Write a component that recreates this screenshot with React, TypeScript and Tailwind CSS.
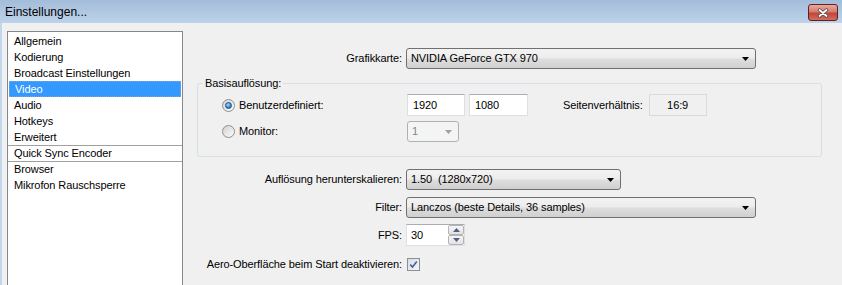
import React from "react";

const navItems = [
  "Allgemein",
  "Kodierung",
  "Broadcast Einstellungen",
  "Video",
  "Audio",
  "Hotkeys",
  "Erweitert",
];

const extraItems = ["Quick Sync Encoder", "Browser", "Mikrofon Rauschsperre"];

function Arrow({ color = "#000" }: { color?: string }) {
  return (
    <svg width="7" height="4" viewBox="0 0 7 4">
      <path d="M0 0H7L3.5 4Z" fill={color} />
    </svg>
  );
}

function Combo({ className, text }: { className: string; text: string }) {
  return (
    <div
      className={`${className} flex h-[21px] items-center justify-between rounded-[3px] border border-[#707070] bg-[linear-gradient(to_bottom,#f3f3f3_0%,#ececec_48%,#dedede_52%,#d0d0d0_100%)] pl-[4px] pr-[6px]`}
    >
      <span className="whitespace-pre">{text}</span>
      <Arrow />
    </div>
  );
}

function Radio({ checked }: { checked?: boolean }) {
  return (
    <span className="flex h-[13px] w-[13px] items-center justify-center rounded-full border border-[#8e8f8f] bg-[linear-gradient(135deg,#d2d2d2,#fbfbfb)]">
      {checked && (
        <span className="h-[7px] w-[7px] rounded-full border border-[#1b4f8c] bg-[radial-gradient(circle_at_40%_35%,#a8e0ff,#2f85d6_60%,#14508f)]" />
      )}
    </span>
  );
}

function TextBox({ className, value }: { className: string; value: string }) {
  return (
    <div
      className={`${className} flex h-[22px] items-center border border-[#dcdfe4] border-t-[#abadb3] bg-white pl-[5px]`}
    >
      {value}
    </div>
  );
}

function Label({ children }: { children: React.ReactNode }) {
  return <span className="w-[205px] shrink-0 text-right">{children}</span>;
}

export default function App() {
  return (
    <div className="h-[285px] w-[842px] overflow-hidden bg-[#f0f0f0] font-['Liberation_Sans',Arial,sans-serif] text-[11px] tracking-[-0.1px] text-black">
      {/* title bar */}
      <div className="flex h-[23px] items-start justify-between bg-[linear-gradient(to_bottom,#a3bcd9,#bdd3eb)]">
        <span className="pl-[5px] pt-[5px] text-[12px] leading-[14px] tracking-normal">Einstellungen...</span>
        <div className="mr-[4px] mt-[4px] flex h-[17px] w-[30px] items-center justify-center rounded-[3px] border border-[#5b2323] bg-[linear-gradient(to_bottom,#eaaa9d,#d57c6e_45%,#c1463a_55%,#d46e5f)]">
          <svg width="12" height="10" viewBox="0 0 12 10">
            <path d="M2.5 2L9.5 8M9.5 2L2.5 8" stroke="#4a4a4a" strokeWidth="3.4" strokeLinecap="round" />
            <path d="M2.5 2L9.5 8M9.5 2L2.5 8" stroke="#fff" strokeWidth="1.8" strokeLinecap="round" />
          </svg>
        </div>
      </div>

      <div className="flex h-[262px] border-l-2 border-[#c2d6ec]">
        {/* category list */}
        <div className="ml-[5px] mt-[8px] h-[300px] w-[176px] shrink-0 border border-[#828790] bg-white pt-[1px]">
          {navItems.map((item) =>
            item === "Video" ? (
              <div
                key={item}
                className="mx-[1px] flex h-[16px] items-center border border-dotted border-[#7aa6d8] bg-[#3399ff] pl-[5px] text-white"
              >
                {item}
              </div>
            ) : (
              <div key={item} className="flex h-[16px] items-center pl-[6px]">
                {item}
              </div>
            )
          )}
          {extraItems.map((item, i) => (
            <div
              key={item}
              className={`flex h-[16px] items-center pl-[6px] ${
                i < 2 ? "border-t border-[#a0a0a0]" : ""
              }`}
            >
              {item}
            </div>
          ))}
        </div>

        {/* settings panel */}
        <div className="ml-[14px] flex w-[625px] flex-col pt-[25px]">
          <div className="flex items-center gap-[4px]">
            <Label>Grafikkarte:</Label>
            <Combo className="w-[350px]" text="NVIDIA GeForce GTX 970" />
          </div>

          <fieldset className="mt-[7px] h-[81px] rounded-[3px] border border-[#d5dfe5]">
            <legend className="ml-[5px] px-[2px] leading-[14px]">Basisauflösung:</legend>
            <div className="mt-[4px] flex h-[22px] items-center">
              <div className="flex w-[209px] shrink-0 items-center pl-[24px]">
                <Radio checked />
                <span className="ml-[4px]">Benutzerdefiniert:</span>
              </div>
              <TextBox className="w-[58px]" value="1920" />
              <TextBox className="ml-[4px] w-[59px]" value="1080" />
              <span className="ml-[35px]">Seitenverhältnis:</span>
              <div className="ml-[6px] flex h-[22px] w-[58px] items-center justify-center border border-[#dadada]">
                16:9
              </div>
            </div>
            <div className="mt-[5px] flex h-[21px] items-center">
              <div className="flex w-[209px] shrink-0 items-center pl-[24px]">
                <Radio />
                <span className="ml-[4px]">Monitor:</span>
              </div>
              <div className="flex h-[21px] w-[52px] items-center justify-between rounded-[3px] border border-[#adb2b5] bg-[#f4f4f4] pl-[4px] pr-[6px] text-[#838383]">
                <span>1</span>
                <Arrow color="#a0a0a0" />
              </div>
            </div>
          </fieldset>

          <div className="mt-[12px] flex items-center gap-[4px]">
            <Label>Auflösung herunterskalieren:</Label>
            <Combo className="w-[215px]" text="1.50  (1280x720)" />
          </div>

          <div className="mt-[7px] flex items-center gap-[4px]">
            <Label>Filter:</Label>
            <Combo className="w-[350px]" text="Lanczos (beste Details, 36 samples)" />
          </div>

          <div className="mt-[6px] flex items-center gap-[4px]">
            <Label>FPS:</Label>
            <div className="flex h-[22px] w-[59px] items-center border border-[#dcdfe4] border-t-[#abadb3] bg-white pl-[4px]">
              <span className="flex-1">30</span>
              <div className="flex flex-col">
                <span className="flex h-[10px] w-[16px] items-center justify-center rounded-[2px] border border-[#b4b4b4] bg-[linear-gradient(to_bottom,#f6f6f6,#e2e2e2)]">
                  <svg width="7" height="4" viewBox="0 0 7 4">
                    <path d="M0 4H7L3.5 0Z" fill="#4d6185" />
                  </svg>
                </span>
                <span className="flex h-[10px] w-[16px] items-center justify-center rounded-[2px] border border-[#b4b4b4] bg-[linear-gradient(to_bottom,#f6f6f6,#e2e2e2)]">
                  <Arrow color="#4d6185" />
                </span>
              </div>
            </div>
          </div>

          <div className="mt-[10px] flex items-center gap-[4px]">
            <Label>Aero-Oberfläche beim Start deaktivieren:</Label>
            <span className="ml-[1px] flex h-[13px] w-[13px] items-center justify-center border border-[#8f8f8f] bg-[linear-gradient(135deg,#d5dde8,#f4f7fa)]">
              <svg width="9" height="9" viewBox="0 0 9 9">
                <path d="M1.2 4.6L3.5 7L7.8 1.4" stroke="#4a5f97" strokeWidth="1.6" fill="none" />
              </svg>
            </span>
          </div>
        </div>
      </div>
    </div>
  );
}
